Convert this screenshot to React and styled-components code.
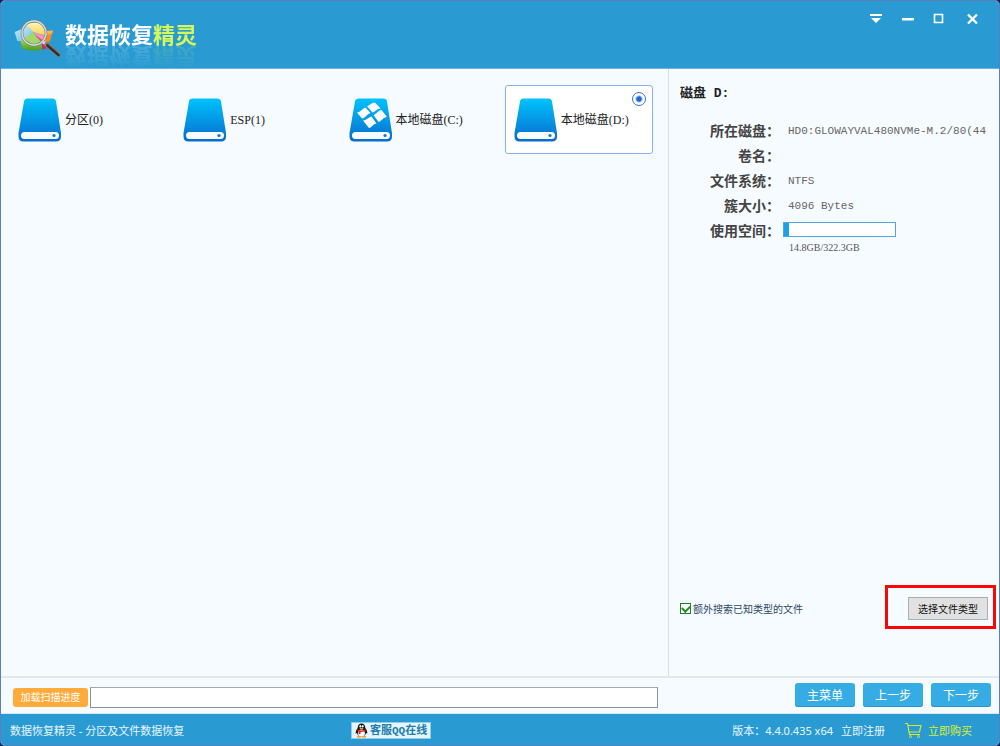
import React, { useState } from 'react';
import styled, { createGlobalStyle } from 'styled-components';

const ui = '"Noto Sans", "Noto Sans CJK SC", sans-serif';
const song = '"Liberation Serif", "Noto Sans CJK SC", serif';
const mono = '"Liberation Mono", "Noto Sans CJK SC", monospace';

const GlobalStyle = createGlobalStyle`
  * { box-sizing: border-box; }
  body { margin: 0; background: #14244a; font-family: ${ui}; }
  button, input { font-family: inherit; }
`;

const Window = styled.div`
  min-height: 100vh;
  display: flex;
  flex-direction: column;
  overflow: hidden;
  border: 1px solid #5b7fbd;
  border-radius: 5px;
  background: #f6fbff;
`;

const Header = styled.header`
  display: flex;
  justify-content: space-between;
  align-items: flex-start;
  height: 68px;
  padding: 8px 16px 0 13px;
  background: #299bd2;
  border-bottom: 1px solid #62b8e2;
`;

const Brand = styled.h1`
  display: flex;
  align-items: flex-start;
  gap: 3px;
  margin: 0;
  padding-top: 8px;
`;

const BrandName = styled.span`
  font-size: 22px;
  line-height: 34px;
  font-weight: 700;
  color: #fff;
  -webkit-box-reflect: below -11px linear-gradient(transparent 10%, rgba(255, 255, 255, 0.2));
`;

const BrandAccent = styled.span`
  color: #d3f75c;
`;

const WindowControls = styled.div`
  display: flex;
  gap: 10px;
`;

const ControlButton = styled.button`
  display: grid;
  place-items: center;
  width: 22px;
  height: 20px;
  padding: 0;
  border: 0;
  background: none;
  color: #fff;
`;

const Body = styled.div`
  flex: 1;
  display: flex;
`;

const DriveGrid = styled.main`
  flex: 1;
  display: grid;
  grid-template-columns: repeat(4, 1fr);
  align-content: start;
  gap: 17px;
  padding: 16px 15px 16px 8px;
`;

const DriveCard = styled.label`
  position: relative;
  display: flex;
  align-items: center;
  gap: 3px;
  height: 69px;
  padding: 0 7px 0 8px;
  border: 1px solid ${(p) => (p.$selected ? '#82b1fb' : 'transparent')};
  border-radius: 3px;
  background: ${(p) => (p.$selected ? '#fff' : 'transparent')};
  font-family: ${song};
  font-size: 12px;
  line-height: 16px;
  color: #222;
`;

const DriveRadio = styled.input`
  appearance: none;
  position: absolute;
  top: 6px;
  right: 6px;
  width: 14px;
  height: 14px;
  margin: 0;
  border: 1px solid #2f74d6;
  border-radius: 50%;
  background: radial-gradient(circle, #1c66d0 2px, #fff 4px);
  opacity: ${(p) => (p.checked ? 1 : 0)};
`;

const Details = styled.aside`
  display: flex;
  flex-direction: column;
  width: 331px;
  padding: 14px 11px 47px 11px;
  border-left: 1px solid #dcdfe2;
`;

const DetailsTitle = styled.h2`
  margin: 0 0 13px;
  font-family: ${mono};
  font-size: 13px;
  line-height: 22px;
  font-weight: 700;
  color: #222;
`;

const DetailList = styled.dl`
  display: grid;
  grid-template-columns: 100px minmax(0, 1fr);
  column-gap: 8px;
  margin: 0;
`;

const DetailLabel = styled.dt`
  font-size: 14px;
  line-height: 25px;
  text-align: right;
  font-weight: 700;
  color: #444;
  white-space: nowrap;
`;

const DetailValue = styled.dd`
  margin: 0;
  padding-top: 2px;
  overflow: hidden;
  white-space: nowrap;
  font-family: ${mono};
  font-size: 11px;
  line-height: 23px;
  color: #666;
`;

const UsageValue = styled.dd`
  margin: 4px 0 0 -5px;
`;

const UsageBar = styled.div`
  width: 113px;
  height: 15px;
  border: 1px solid #4ba7dc;
  background: #fff;
`;

const UsageFill = styled.div`
  height: 100%;
  background: #1ba1e8;
`;

const UsageText = styled.div`
  padding: 4px 0 0 6px;
  font-family: ${song};
  font-size: 10px;
  line-height: 14px;
  color: #555;
`;

const SearchOptions = styled.div`
  display: flex;
  justify-content: space-between;
  align-items: center;
  margin-top: auto;
  padding-bottom: 9px;
`;

const CheckLabel = styled.label`
  display: flex;
  align-items: center;
  gap: 2px;
  font-size: 10px;
  line-height: 16px;
  color: #2c4766;
`;

const CheckBox = styled.input`
  appearance: none;
  width: 11px;
  height: 11px;
  margin: 0;
  border: 1px solid #1d7f1d;
  background: #fff;
  display: grid;
  place-items: center;
  &:checked::before {
    content: '';
    width: 6px;
    height: 4px;
    margin-top: -2px;
    border: solid #1f8a1f;
    border-width: 0 0 2px 2px;
    transform: rotate(-45deg);
  }
`;

const Highlight = styled.div`
  position: relative;
  &::after {
    content: '';
    position: absolute;
    inset: -12px -8px -9px -23px;
    border: 3px solid #fb0606;
    pointer-events: none;
  }
`;

const TypeButton = styled.button`
  display: block;
  width: 80px;
  height: 23px;
  padding: 0;
  border: 1px solid #adadad;
  background: #e1e1e1;
  font-size: 10px;
  color: #111;
`;

const ActionBar = styled.div`
  display: flex;
  align-items: center;
  height: 38px;
  padding: 0 8px 0 12px;
  border-top: 2px solid #e3e7ea;
  border-bottom: 1px solid #d9e9f2;
`;

const LoadButton = styled.button`
  width: 75px;
  height: 19px;
  padding: 0;
  margin: 4px 2px 0 0;
  border: 0;
  border-radius: 3px;
  background: #ffab3c;
  color: #fff;
  font-size: 10px;
  line-height: 19px;
`;

const ProgressField = styled.input`
  flex: 1;
  height: 21px;
  margin: 4px 0 0;
  border: 1px solid #8e9195;
  border-top-color: #a4a8ac;
  background: #fff;
`;

const StepButtons = styled.nav`
  display: flex;
  gap: 8px;
  margin: 0 0 2px 137px;
`;

const StepButton = styled.button`
  width: 60px;
  height: 24px;
  padding: 0;
  border: 0;
  border-radius: 3px;
  background: #35ace3;
  box-shadow: inset 0 -1px 0 #2b97cf;
  color: #fff;
  font-size: 12px;
`;

const StatusBar = styled.footer`
  display: grid;
  grid-template-columns: 341px 1fr auto;
  align-items: center;
  height: 31px;
  padding: 2px 27px 0 9px;
  background: #299bd2;
  color: #e9f6fd;
  font-size: 11px;
  line-height: 16px;
`;

const ServiceLink = styled.a`
  justify-self: start;
  display: flex;
  align-items: center;
  gap: 2px;
  height: 17px;
  padding: 0 3px;
  border: 1px solid #8fcdea;
  background: #e6f4fb;
  font-family: ${mono};
  font-weight: 700;
  color: #1a7db0;
  text-decoration: none;
  white-space: nowrap;
`;

const StatusRight = styled.div`
  display: flex;
  align-items: center;
  white-space: nowrap;
`;

const RegisterLink = styled.a`
  margin: 0 20px 0 8px;
  color: inherit;
  text-decoration: none;
`;

const BuyLink = styled.a`
  display: flex;
  align-items: center;
  gap: 6px;
  color: #d8f02e;
  text-decoration: none;
`;

function LogoIcon() {
  return (
    <svg width="48" height="42" viewBox="0 0 48 42" aria-hidden="true">
      <defs>
        <linearGradient id="green" x1="0" y1="0" x2="0" y2="1">
          <stop offset="0" stopColor="#8ed048" />
          <stop offset="1" stopColor="#4a9c1c" />
        </linearGradient>
        <linearGradient id="blue" x1="0" y1="0" x2="1" y2="1">
          <stop offset="0" stopColor="#d6f2fc" />
          <stop offset="1" stopColor="#53b4e4" />
        </linearGradient>
        <linearGradient id="gold" x1="0" y1="0" x2="0" y2="1">
          <stop offset="0" stopColor="#fff3a4" />
          <stop offset="1" stopColor="#f6c72e" />
        </linearGradient>
      </defs>
      <path d="M.7 15l6-2.500 6-5.500 6.300 8.500-9 8.500-6.700 0z" fill="url(#blue)" />
      <path d="M6.500 24l1.500 7c5 3 13 3.500 20 1.500l-.500-8.500z" fill="url(#green)" />
      <path d="M7 24l12-9 8.500 10.500c-5 3.500-14 3.500-20.500-1.500z" fill="#8ed048" />
      <path d="M12.500 8c5-3 13-3 18 1l3 10-14.500-4z" fill="url(#gold)" />
      <path d="M31 14.500l8-1-3 11-6 1.500z" fill="#f48b1f" />
      <path d="M31 14l8-.500-1 3-7 2z" fill="#ffb14e" />
      <path d="M19 15l12 4 1.500 5-5 1z" fill="#f2829b" />
      <path d="M20 17l8 8.500v7l4.500-1-.5-6z" fill="#da2462" />
      <circle cx="20" cy="16" r="12" fill="#fff" fillOpacity=".18" stroke="#777e83" strokeWidth="2.600" />
      <circle cx="20" cy="16" r="12" fill="none" stroke="#d7dcdf" strokeWidth="1.400" />
      <path d="M29 25l4 3" stroke="#d9dcdd" strokeWidth="3" />
      <path d="M32.500 27.500l12 10" stroke="#85807c" strokeWidth="4.600" strokeLinecap="round" />
      <path d="M33.500 28.500l11 9.500" stroke="#37302c" strokeWidth="2.800" strokeLinecap="round" />
    </svg>
  );
}

function DriveIcon({ system }) {
  return (
    <svg width="44" height="44" viewBox="0 0 44 44" aria-hidden="true">
      <defs>
        <linearGradient id="drive" x1="0" y1="0" x2="0" y2="1">
          <stop offset="0" stopColor="#00c3fd" />
          <stop offset="1" stopColor="#076bcd" />
        </linearGradient>
      </defs>
      <path d="M9.500 0.500h25q3 0 3.500 3l5 31.500v3.500q0 5-5 5H5.500q-5 0-5-5V35l5.500-31.500q.5-3 3.500-3z" fill="url(#drive)" />
      <rect x="3" y="34" width="38" height="7" rx="3.500" fill="#f8fcff" />
      <circle cx="36" cy="37.500" r="1.600" fill="#1274d0" />
      {system && (
        <g fill="#fff">
          <path d="M8 14.500c4-.5 5-4 8.500-5l5 5.500c-4 1-4.500 5-8.500 5.500z" />
          <path d="M18 8c3-.5 4.500-3.500 8-3.500l5.500 6c-4 0-4.500 3-8 4z" />
          <path d="M14 22.500c4-.5 5-3 8.500-4l5 7c-3.500 0-4 4-7.500 4.500z" />
          <path d="M24.500 17c3.500-1 4.500-4.500 8-5l5.500 7c-4 0-5 4-8.500 5z" />
        </g>
      )}
    </svg>
  );
}

function PenguinIcon() {
  return (
    <svg width="13" height="15" viewBox="0 0 13 15" aria-hidden="true">
      <path d="M6.500.5c2.500 0 3.800 1.800 3.800 4.500 1.200 1.500 2.200 3.500 2 5.500l-1.300-.5c-.5 2-2 3.500-4.500 3.500S2.500 12 2 10l-1.300.5c-.2-2 .8-4 2-5.500C2.700 2.300 4 .5 6.500.5z" fill="#141414" />
      <ellipse cx="6.500" cy="10" rx="3.400" ry="3.500" fill="#fff" />
      <ellipse cx="5.300" cy="3.300" rx=".9" ry="1.200" fill="#fff" />
      <ellipse cx="7.700" cy="3.300" rx=".9" ry="1.200" fill="#fff" />
      <ellipse cx="6.500" cy="5.400" rx="2" ry=".7" fill="#f5a11d" />
      <path d="M2.500 6.500q4 2 8 0v1.700q-3 1-5 .8v2H3.800V8.600l-1.300-.5z" fill="#e51c1c" />
      <ellipse cx="4" cy="13.700" rx="2.300" ry="1" fill="#f2a32c" />
      <ellipse cx="9" cy="13.700" rx="2.300" ry="1" fill="#f2a32c" />
    </svg>
  );
}

function CartIcon() {
  return (
    <svg width="17" height="17" viewBox="0 0 17 17" fill="none" stroke="#d2e82f" aria-hidden="true">
      <path d="M0 1.500h2.500l2 11h10.500M3 3.500h13l-1.500 6.500h-10.500" strokeWidth="1.200" />
      <circle cx="5.500" cy="14.500" r="1" />
      <circle cx="13.500" cy="14.500" r="1" />
    </svg>
  );
}

const controls = [
  ['菜单', <path key="p" fill="#fff" d="M1 2h12v2H1zM2 6h10L7 11z" />],
  ['最小化', <path key="p" fill="#fff" d="M1 6h12v2.500H1z" />],
  ['最大化', <path key="p" fill="none" stroke="#fff" strokeWidth="1.600" d="M1.500 2.500h8v8h-8z" />],
  ['关闭', <path key="p" fill="none" stroke="#fff" strokeWidth="2.400" d="M3 2.500l9 9M12 2.500l-9 9" />],
];

const drives = [
  { name: '分区(0)' },
  { name: 'ESP(1)' },
  { name: '本地磁盘(C:)', system: true },
  { name: '本地磁盘(D:)' },
];

const details = [
  ['所在磁盘：', 'HD0:GLOWAYVAL480NVMe-M.2/80(44'],
  ['卷名：', ''],
  ['文件系统：', 'NTFS'],
  ['簇大小：', '4096 Bytes'],
];

export default function App() {
  const [selected, setSelected] = useState(3);
  const used = (14.8 / 322.3) * 100;
  return (
    <>
      <GlobalStyle />
      <Window>
        <Header>
          <Brand>
            <LogoIcon />
            <BrandName>数据恢复<BrandAccent>精灵</BrandAccent></BrandName>
          </Brand>
          <WindowControls>
            {controls.map(([label, shape]) => (
              <ControlButton key={label} type="button" aria-label={label}>
                <svg width="14" height="14" viewBox="0 0 14 14">{shape}</svg>
              </ControlButton>
            ))}
          </WindowControls>
        </Header>
        <Body>
          <DriveGrid>
            {drives.map((d, i) => (
              <DriveCard key={d.name} $selected={i === selected}>
                <DriveIcon system={d.system} />
                {d.name}
                <DriveRadio type="radio" name="drive" checked={i === selected} onChange={() => setSelected(i)} />
              </DriveCard>
            ))}
          </DriveGrid>
          <Details>
            <DetailsTitle>磁盘 D:</DetailsTitle>
            <DetailList>
              {details.map(([label, value]) => (
                <React.Fragment key={label}>
                  <DetailLabel>{label}</DetailLabel>
                  <DetailValue>{value}</DetailValue>
                </React.Fragment>
              ))}
              <DetailLabel>使用空间：</DetailLabel>
              <UsageValue>
                <UsageBar><UsageFill style={{ width: `${used}%` }} /></UsageBar>
                <UsageText>14.8GB/322.3GB</UsageText>
              </UsageValue>
            </DetailList>
            <SearchOptions>
              <CheckLabel>
                <CheckBox type="checkbox" defaultChecked />
                额外搜索已知类型的文件
              </CheckLabel>
              <Highlight>
                <TypeButton type="button">选择文件类型</TypeButton>
              </Highlight>
            </SearchOptions>
          </Details>
        </Body>
        <ActionBar>
          <LoadButton type="button">加载扫描进度</LoadButton>
          <ProgressField type="text" aria-label="扫描进度文件" />
          <StepButtons>
            <StepButton type="button">主菜单</StepButton>
            <StepButton type="button">上一步</StepButton>
            <StepButton type="button">下一步</StepButton>
          </StepButtons>
        </ActionBar>
        <StatusBar>
          <span>数据恢复精灵 - 分区及文件数据恢复</span>
          <ServiceLink href="#service"><PenguinIcon />客服QQ在线</ServiceLink>
          <StatusRight>
            <span>版本：4.4.0.435 x64</span>
            <RegisterLink href="#register">立即注册</RegisterLink>
            <BuyLink href="#buy"><CartIcon />立即购买</BuyLink>
          </StatusRight>
        </StatusBar>
      </Window>
    </>
  );
}
